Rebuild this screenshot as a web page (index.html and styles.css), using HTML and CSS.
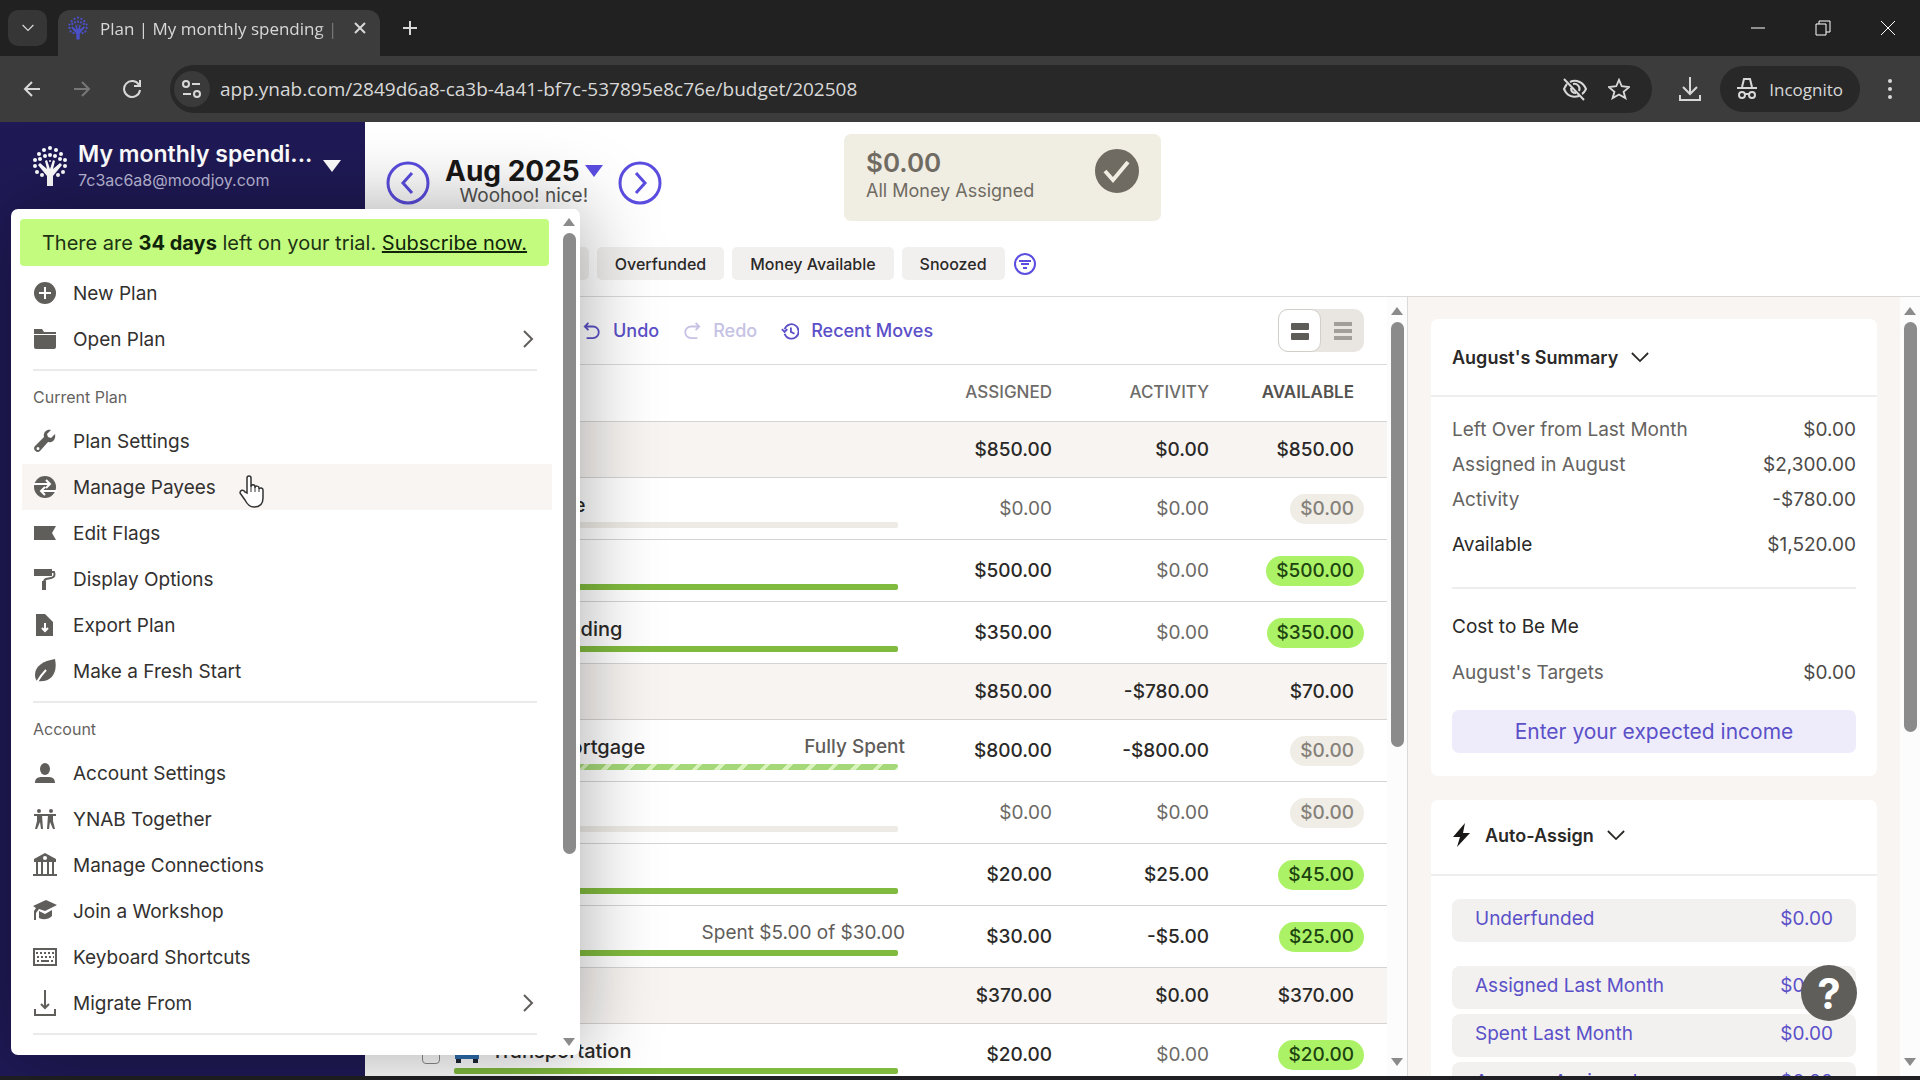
FILE: index.html
```
<!DOCTYPE html>
<html lang="en">
<head>
    <meta charset="UTF-8">
    <meta name="viewport" content="width=device-width, initial-scale=1.0">
    <title>Plan | My monthly spending | YNAB</title>
    <link rel="stylesheet" href="styles.css">
</head>
<body>
    <!-- shared icons -->
    <svg class="sprite" aria-hidden="true">
        <symbol id="chevron-right" viewBox="0 0 12 20"><path d="M2 2l8 8-8 8" fill="none" stroke="currentColor" stroke-width="2"/></symbol>
        <symbol id="chevron-down" viewBox="0 0 20 12"><path d="M1 1l9 9 9-9" fill="none" stroke="currentColor" stroke-width="2"/></symbol>
        <symbol id="tree" viewBox="0 0 34 42">
            <path d="M14 41V31L5 20l2-2 7 6-2-8 2-1 3 9 3-9 2 1-2 8 7-6 2 2-9 11v10z"/>
            <circle cx="17" cy="3" r="2"/><circle cx="17" cy="10" r="2"/><circle cx="11" cy="5" r="2"/><circle cx="23" cy="5" r="2"/>
            <circle cx="12" cy="11" r="2"/><circle cx="22" cy="11" r="2"/><circle cx="6" cy="9" r="2"/><circle cx="28" cy="9" r="2"/>
            <circle cx="7" cy="14" r="2"/><circle cx="27" cy="14" r="2"/><circle cx="2" cy="15" r="2"/><circle cx="32" cy="15" r="2"/>
            <circle cx="2" cy="21" r="2"/><circle cx="32" cy="21" r="2"/><circle cx="4" cy="27" r="2"/><circle cx="30" cy="27" r="2"/>
            <circle cx="9" cy="30" r="2"/><circle cx="25" cy="30" r="2"/><circle cx="17" cy="16" r="1"/>
        </symbol>
    </svg>

    <div class="tab-strip">
        <button class="tab-search" aria-label="Search tabs"><svg width="12" height="8"><use href="#chevron-down"/></svg></button>
        <div class="tab">
            <svg class="tab-logo" width="20" height="24"><use href="#tree"/></svg>
            <span class="tab-title">Plan | My monthly spending | YNAB</span>
            <button class="tab-close" aria-label="Close tab"><svg width="12" height="12" viewBox="0 0 12 12"><path d="M1 1l10 10M11 1L1 11"/></svg></button>
        </div>
        <button class="tab-new" aria-label="New tab"><svg width="16" height="16" viewBox="0 0 16 16"><path d="M8 1v14M1 8h14"/></svg></button>
        <div class="window-buttons">
            <button aria-label="Minimize"><svg width="14" height="16" viewBox="0 0 14 16"><path d="M0 8h14"/></svg></button>
            <button aria-label="Restore"><svg width="16" height="16" viewBox="0 0 16 16"><path d="M1 4h10v11H1zM4 4V1h11v11h-4"/></svg></button>
            <button aria-label="Close"><svg width="14" height="16" viewBox="0 0 14 16"><path d="M0 1l14 14M14 1L0 15"/></svg></button>
        </div>
    </div>

    <div class="toolbar">
        <button aria-label="Back"><svg width="18" height="18" viewBox="0 0 18 18"><path d="M17 9H2M9 2L2 9l7 7"/></svg></button>
        <button class="dim" aria-label="Forward"><svg width="18" height="18" viewBox="0 0 18 18"><path d="M1 9h15M9 2l7 7-7 7"/></svg></button>
        <button aria-label="Reload"><svg width="20" height="20" viewBox="0 0 20 20"><path d="M17 6a8 8 0 1 0 1 5M18 1v6h-6"/></svg></button>
        <div class="address-bar">
            <button class="site-info" aria-label="Site information"><svg width="20" height="18" viewBox="0 0 20 18"><circle cx="4" cy="4" r="3"/><path d="M10 4h8M1 14h8"/><circle cx="15" cy="14" r="3"/></svg></button>
            <input class="address" type="text" aria-label="Address" value="app.ynab.com/2849d6a8-ca3b-4a41-bf7c-537895e8c76e/budget/202508">
            <button aria-label="Tracking protection"><svg width="26" height="26" viewBox="0 0 26 26"><path d="M8 6c6-3 13 0 16 7-1 2-2 4-4 5M17 20C11 22 5 20 2 13c1-2 2-4 3-5M2 3l20 21M11 8c4-1 8 3 6 7M9 12c0 3 2 5 5 5"/></svg></button>
            <button aria-label="Bookmark"><svg width="22" height="22" viewBox="0 0 24 24"><path d="M12 2l3 7 8 1-6 5 2 7-7-4-7 4 2-7-6-5 8-1z"/></svg></button>
        </div>
        <button class="download" aria-label="Downloads"><svg width="24" height="26" viewBox="0 0 24 26"><path d="M12 1v16M5 11l7 7 7-7M2 19v5h20v-5"/></svg></button>
        <button class="incognito"><svg width="20" height="22" viewBox="0 0 20 22"><path d="M0 10h20M5 9l2-8h6l2 8"/><circle cx="5" cy="17" r="3"/><circle cx="15" cy="17" r="3"/><path d="M8 16h4"/></svg>Incognito</button>
        <button aria-label="Browser menu"><svg class="solid" width="6" height="24" viewBox="0 0 6 24"><circle cx="3" cy="4" r="2"/><circle cx="3" cy="12" r="2"/><circle cx="3" cy="20" r="2"/></svg></button>
    </div>

    <div class="app">
        <aside class="sidebar">
            <button class="plan-button">
                <svg class="logo" width="34" height="42"><use href="#tree"/></svg>
                <span class="plan-text">
                    <span class="plan-name">My monthly spendi...</span>
                    <span class="plan-email">7c3ac6a8@moodjoy.com</span>
                </span>
                <span class="caret"></span>
            </button>
        </aside>

        <main class="main">
            <header class="plan-header">
                <div class="header-top">
                    <div class="month-nav">
                        <button aria-label="Previous month"><svg width="44" height="44" viewBox="0 0 44 44"><circle cx="22" cy="22" r="20"/><path d="M26 12L17 22l9 10"/></svg></button>
                        <div class="month">
                            <button class="month-name">Aug 2025<span class="caret"></span></button>
                            <div class="month-note">Woohoo! nice!</div>
                        </div>
                        <button aria-label="Next month"><svg width="44" height="44" viewBox="0 0 44 44"><circle cx="22" cy="22" r="20"/><path d="M18 12l9 10-9 10"/></svg></button>
                    </div>
                    <div class="ready">
                        <div>
                            <div class="ready-amount">$0.00</div>
                            <div class="ready-label">All Money Assigned</div>
                        </div>
                        <svg width="44" height="50" viewBox="0 0 44 50"><circle cx="22" cy="25" r="21" fill="#6f6b63"/><path d="M10 25l8 9 15-18" fill="none" stroke="#f0ede2" stroke-width="4"/></svg>
                    </div>
                </div>
                <div class="filters">
                    <button class="chip">Underfunded</button>
                    <button class="chip">Overfunded</button>
                    <button class="chip">Money Available</button>
                    <button class="chip">Snoozed</button>
                    <button class="filter-more" aria-label="Filters"><svg width="24" height="24" viewBox="0 0 24 24"><circle cx="12" cy="12" r="10"/><path d="M6 9h12M8 12h8M10 16h4"/></svg></button>
                </div>
            </header>

            <div class="columns">
                <section class="budget">
                    <div class="budget-content">
                        <div class="budget-tools">
                            <button class="tool"><svg width="18" height="18" viewBox="0 0 20 20"><path d="M6 1L2 5l4 4M2 5h9a6 6 0 0 1 0 13H4"/></svg>Undo</button>
                            <button class="tool" disabled><svg width="18" height="18" viewBox="0 0 20 20"><path d="M14 1l4 4-4 4M18 5H9a6 6 0 0 0 0 13h7"/></svg>Redo</button>
                            <button class="tool"><svg width="18" height="18" viewBox="0 0 20 20"><path d="M4 8a8 8 0 1 1 0 5M1 8l3 3 3-3M11 6v5l4 2"/></svg>Recent Moves</button>
                            <div class="view-toggle">
                                <button class="active" aria-label="Expanded view"><svg width="20" height="20" viewBox="0 0 20 20"><rect x="1" y="2" width="18" height="7" rx="1"/><rect x="1" y="12" width="18" height="7" rx="1"/></svg></button>
                                <button aria-label="Compact view"><svg width="20" height="20" viewBox="0 0 20 20"><rect x="1" y="1" width="18" height="4"/><rect x="1" y="8" width="18" height="4"/><rect x="1" y="15" width="18" height="4"/></svg></button>
                            </div>
                        </div>
                        <table class="budget-table">
                            <thead>
                                <tr>
                                    <th class="col-name"></th>
                                    <th class="col-assigned">ASSIGNED</th>
                                    <th class="col-activity">ACTIVITY</th>
                                    <th class="col-available"><span class="amount">AVAILABLE</span></th>
                                </tr>
                            </thead>
                            <tbody>
                                <tr class="group">
                                    <td></td><td>$850.00</td><td>$0.00</td><td><span class="amount">$850.00</span></td>
                                </tr>
                                <tr>
                                    <td><div class="category"><input type="checkbox" aria-label="Insurance"><div class="category-body"><div class="category-line"><span class="emoji"></span><span>Insurance</span></div><div class="bar empty"></div></div></div></td>
                                    <td class="zero">$0.00</td><td class="zero">$0.00</td><td><span class="amount none">$0.00</span></td>
                                </tr>
                                <tr>
                                    <td><div class="category"><input type="checkbox" aria-label="Savings"><div class="category-body"><div class="category-line"><span class="emoji"></span><span>Savings</span></div><div class="bar"></div></div></div></td>
                                    <td>$500.00</td><td class="zero">$0.00</td><td><span class="amount funded">$500.00</span></td>
                                </tr>
                                <tr>
                                    <td><div class="category"><input type="checkbox" aria-label="Fun Spending"><div class="category-body"><div class="category-line"><span class="emoji"></span><span>Fun Spending</span></div><div class="bar"></div></div></div></td>
                                    <td>$350.00</td><td class="zero">$0.00</td><td><span class="amount funded">$350.00</span></td>
                                </tr>
                                <tr class="group">
                                    <td></td><td>$850.00</td><td>-$780.00</td><td><span class="amount">$70.00</span></td>
                                </tr>
                                <tr>
                                    <td><div class="category"><input type="checkbox" aria-label="Rent / Mortgage"><div class="category-body"><div class="category-line"><span class="emoji"></span><span>Rent / Mortgage</span><span class="status strong">Fully Spent</span></div><div class="bar spent"></div></div></div></td>
                                    <td>$800.00</td><td>-$800.00</td><td><span class="amount none">$0.00</span></td>
                                </tr>
                                <tr>
                                    <td><div class="category"><input type="checkbox" aria-label="Water"><div class="category-body"><div class="category-line"><span class="emoji"></span><span>Water</span></div><div class="bar empty"></div></div></div></td>
                                    <td class="zero">$0.00</td><td class="zero">$0.00</td><td><span class="amount none">$0.00</span></td>
                                </tr>
                                <tr>
                                    <td><div class="category"><input type="checkbox" aria-label="Phone"><div class="category-body"><div class="category-line"><span class="emoji"></span><span>Phone</span></div><div class="bar"></div></div></div></td>
                                    <td>$20.00</td><td>$25.00</td><td><span class="amount funded">$45.00</span></td>
                                </tr>
                                <tr>
                                    <td><div class="category"><input type="checkbox" aria-label="Internet"><div class="category-body"><div class="category-line"><span class="emoji"></span><span>Internet</span><span class="status">Spent $5.00 of $30.00</span></div><div class="bar"></div></div></div></td>
                                    <td>$30.00</td><td>-$5.00</td><td><span class="amount funded">$25.00</span></td>
                                </tr>
                                <tr class="group">
                                    <td></td><td>$370.00</td><td>$0.00</td><td><span class="amount">$370.00</span></td>
                                </tr>
                                <tr>
                                    <td><div class="category"><input type="checkbox" aria-label="Transportation"><div class="category-body"><div class="category-line"><span class="emoji"><svg width="26" height="24" viewBox="0 0 26 24"><path d="M5 3h16l3 9H2z" fill="#9fc5e8"/><path d="M1 11h24v9H1z" fill="#2f6fb0"/><path d="M2 20h5v4H2zM19 20h5v4h-5z" fill="#1c2733"/></svg></span><span>Transportation</span></div><div class="bar"></div></div></div></td>
                                    <td>$20.00</td><td class="zero">$0.00</td><td><span class="amount funded">$20.00</span></td>
                                </tr>
                            </tbody>
                        </table>
                    </div>
                    <div class="scrollbar"><span class="arrow up"></span><span class="thumb"></span><span class="arrow down"></span></div>
                </section>

                <aside class="inspector">
                    <div class="inspector-content">
                        <section class="card">
                            <h2><button>August's Summary<svg width="18" height="11"><use href="#chevron-down"/></svg></button></h2>
                            <div class="card-body">
                                <dl class="totals">
                                    <div><dt>Left Over from Last Month</dt><dd>$0.00</dd></div>
                                    <div><dt>Assigned in August</dt><dd>$2,300.00</dd></div>
                                    <div><dt>Activity</dt><dd>-$780.00</dd></div>
                                    <div class="total"><dt>Available</dt><dd>$1,520.00</dd></div>
                                </dl>
                                <h3>Cost to Be Me</h3>
                                <dl class="targets">
                                    <div><dt>August's Targets</dt><dd>$0.00</dd></div>
                                </dl>
                                <button class="income">Enter your expected income</button>
                            </div>
                        </section>
                        <section class="card auto">
                            <h2><button><svg class="bolt" width="20" height="24" viewBox="0 0 20 24"><path d="M13 0L1 14h7l-3 10L18 10h-7z"/></svg>Auto-Assign<svg width="18" height="11"><use href="#chevron-down"/></svg></button></h2>
                            <div class="card-body">
                                <button class="assign first">Underfunded<span>$0.00</span></button>
                                <button class="assign">Assigned Last Month<span>$0.00</span></button>
                                <button class="assign">Spent Last Month<span>$0.00</span></button>
                                <button class="assign">Average Assigned<span>$0.00</span></button>
                            </div>
                        </section>
                    </div>
                    <div class="scrollbar"><span class="arrow up"></span><span class="thumb"></span><span class="arrow down"></span></div>
                </aside>
            </div>
        </main>

        <nav class="menu">
            <div class="menu-content">
                <div class="trial"><span>There are <b>34 days</b> left on your trial. <a href="#">Subscribe now.</a></span></div>
                <button class="item"><svg width="24" height="24" viewBox="0 0 24 24"><circle cx="12" cy="12" r="11"/><path class="cut" d="M12 6v12M6 12h12"/></svg>New Plan</button>
                <button class="item"><svg width="24" height="24" viewBox="0 0 24 24"><path d="M1 2h8l2 3h12v2H1zM1 8h22v12a2 2 0 0 1-2 2H3a2 2 0 0 1-2-2z"/></svg>Open Plan<svg class="more" width="12" height="20"><use href="#chevron-right"/></svg></button>
                <div class="menu-heading">Current Plan</div>
                <button class="item"><svg width="24" height="24" viewBox="0 0 24 24"><path d="M22 5l-4 4-3-1-1-3 4-4c-5-1-8 3-7 7L2 17c-3 3 2 8 5 5l8-9c5 1 8-3 7-8zM5 21a1 1 0 1 1 0-3 1 1 0 0 1 0 3z"/></svg>Plan Settings</button>
                <button class="item hover"><svg width="24" height="24" viewBox="0 0 24 24"><circle cx="12" cy="12" r="11"/><path class="cut" d="M0 9h17M13 5l4 4-4 4M24 16H8M12 12l-4 4 4 4"/></svg>Manage Payees</button>
                <button class="item"><svg width="24" height="24" viewBox="0 0 24 24"><path d="M1 5h22l-4 7 4 7H1z"/></svg>Edit Flags</button>
                <button class="item"><svg width="24" height="24" viewBox="0 0 24 24"><path d="M1 2h18v7H1z"/><path class="line" d="M19 5h2q2 5-3 6l-5 1q-2 1-2 3"/><path d="M9 14h4v9H9z"/></svg>Display Options</button>
                <button class="item"><svg width="24" height="24" viewBox="0 0 24 24"><path d="M3 1h9l8 8v14H3z"/><path class="cut" d="M12 10v8M9 15l3 3 3-3"/></svg>Export Plan</button>
                <button class="item"><svg width="24" height="24" viewBox="0 0 24 24"><path d="M22 0C10 2 2 7 2 16c0 3 1 5 2 6C18 24 25 14 22 0z"/><path class="cut" d="M4 23c3-5 5-8 9-12"/></svg>Make a Fresh Start</button>
                <div class="menu-heading">Account</div>
                <button class="item"><svg width="24" height="24" viewBox="0 0 24 24"><ellipse cx="12" cy="8" rx="5" ry="6"/><path d="M2 22c0-7 6-6 10-6s10-1 10 6z"/></svg>Account Settings</button>
                <button class="item"><svg width="24" height="24" viewBox="0 0 24 24"><circle cx="6" cy="4" r="2"/><circle cx="18" cy="4" r="2"/><path class="line" d="M1 8h22"/><path d="M4 8h5l1 14H8l-1-7-3 7H2l2-8zM15 8h5v6l2 8h-2l-3-7-1 7h-2z"/></svg>YNAB Together</button>
                <button class="item"><svg width="24" height="24" viewBox="0 0 24 24"><path d="M12 0l11 6v3H1V6z"/><path class="line" d="M4 9v12M9 9v12M15 9v12M20 9v12M0 22h24"/><circle class="hole" cx="12" cy="5" r="2"/></svg>Manage Connections</button>
                <button class="item"><svg width="24" height="24" viewBox="0 0 24 24"><path d="M0 7l13-6 11 5-12 6-6-2-3 4v7H1v-9l2-3zM6 12l6 3 7-4v6c-4 4-9 4-13 2z"/></svg>Join a Workshop</button>
                <button class="item"><svg width="24" height="24" viewBox="0 0 24 24"><rect class="line" x="1" y="4" width="22" height="16"/><path class="line dashed" d="M3 8h18M4 12h17"/><path class="line" d="M4 16h2M8 16h8M18 16h2"/></svg>Keyboard Shortcuts</button>
                <button class="item"><svg width="24" height="28" viewBox="0 0 24 28"><path class="line" d="M12 1v18M8 15l4 4 4-4M2 20v6h20v-6"/></svg>Migrate From<svg class="more" width="12" height="20"><use href="#chevron-right"/></svg></button>
                <div class="menu-heading"></div>
            </div>
            <div class="scrollbar"><span class="arrow up"></span><span class="thumb"></span><span class="arrow down"></span></div>
        </nav>

        <svg class="pointer" width="26" height="34" viewBox="0 0 26 34"><path d="M8 19V4a2 2 0 0 1 4 0v9c0-3 4-3 4 0v1c0-3 4-2 4 0v1c1-2 4-1 4 1v8c0 6-3 9-9 9-5 0-7-3-9-7l-5-7c0-3 3-4 5-1z" fill="#fff" stroke="#333" stroke-width="1.5"/><path d="M12 13v5M16 14v4M20 15v3" stroke="#333" stroke-width="1"/></svg>
        <button class="help" aria-label="Help">?</button>
    </div>
    <footer class="taskbar"></footer>
</body>
</html>
```
FILE: styles.css
```
* {
    box-sizing: border-box;
}
body {
    margin: 0;
    height: 100vh;
    display: flex;
    flex-direction: column;
    overflow: hidden;
    font-family: Inter, "Liberation Sans", sans-serif;
    font-size: 19px;
    color: #2a2927;
    background: #fff;
}
button {
    font: inherit;
    color: inherit;
    background: none;
    border: 0;
    padding: 0;
    display: flex;
    align-items: center;
    justify-content: center;
    text-align: left;
    white-space: nowrap;
}
svg {
    flex: none;
    fill: none;
    stroke: currentColor;
    stroke-width: 2;
}
.sprite {
    display: none;
}

/* browser window */
.tab-strip, .toolbar {
    font-family: "Open Sans", "Noto Sans", sans-serif;
    color: #d8d8d8;
    display: flex;
    flex: none;
}
.tab-strip {
    height: 56px;
    padding: 10px 0 0 8px;
    background: #212121;
}
.tab-search {
    width: 39px;
    height: 36px;
    border-radius: 10px;
    background: #363636;
}
.tab {
    width: 322px;
    margin-left: 11px;
    padding: 0 14px 10px 10px;
    display: flex;
    align-items: center;
    gap: 12px;
    border-radius: 12px 12px 0 0;
    background: #3c3c3c;
    font-size: 17px;
}
.tab-logo {
    fill: #4a50c8;
    stroke: none;
}
.tab-title {
    flex: 1;
    overflow: hidden;
    white-space: nowrap;
    mask-image: linear-gradient(to right, #000 90%, transparent);
}
.tab-new {
    width: 60px;
    height: 36px;
}
.window-buttons {
    margin-left: auto;
    display: flex;
    height: 36px;
}
.window-buttons button {
    width: 65px;
    color: #fff;
}
.window-buttons svg {
    stroke-width: 1;
}
.toolbar {
    height: 66px;
    padding: 0 18px 0 20px;
    align-items: center;
    background: #3c3c3c;
}
.toolbar > button {
    width: 24px;
    margin-right: 26px;
}
.toolbar > button:last-child {
    margin-right: 0;
}
.toolbar .dim {
    color: #777;
}
.address-bar {
    flex: 1;
    height: 48px;
    padding: 0 22px 0 4px;
    display: flex;
    align-items: center;
    gap: 20px;
    border-radius: 24px;
    background: #282828;
}
.site-info {
    width: 36px;
    height: 36px;
    border-radius: 18px;
    background: #3a3a3a;
}
.address {
    flex: 1;
    padding: 0;
    margin-left: -10px;
    border: 0;
    background: none;
    font: inherit;
    color: #d8d8d8;
}
.toolbar .download {
    margin: 0 18px 0 26px;
}
.toolbar .incognito {
    width: auto;
    height: 46px;
    margin-right: 18px;
    padding: 0 17px;
    gap: 12px;
    border-radius: 23px;
    background: #282828;
    font-size: 17px;
}
.solid {
    fill: currentColor;
    stroke: none;
}

/* app */
.app {
    flex: 1;
    min-height: 0;
    display: flex;
    position: relative;
}
.taskbar {
    height: 4px;
    flex: none;
    background: #202024;
}
.sidebar {
    width: 365px;
    flex: none;
    background: #1f1a56;
}
.plan-button {
    width: 100%;
    height: 88px;
    padding: 0 24px 0 33px;
    justify-content: flex-start;
    color: #fff;
}
.logo {
    fill: #fff;
    stroke: none;
}
.plan-text {
    flex: 1;
    margin-left: 11px;
}
.plan-name, .plan-email {
    display: block;
}
.plan-name {
    font-size: 23px;
    line-height: 28px;
    font-weight: 600;
}
.plan-email {
    font-size: 16px;
    line-height: 24px;
    color: #bcb9d8;
}
.caret {
    border: 9px solid transparent;
    border-top: 12px solid currentColor;
    border-bottom: 0;
}
.main {
    flex: 1;
    min-width: 0;
    display: flex;
    flex-direction: column;
}
.plan-header {
    flex: none;
    padding: 12px 21px 16px;
    border-bottom: 1px solid #dcdad8;
}
.header-top {
    display: flex;
    height: 87px;
}
.month-nav {
    width: 458px;
    padding-top: 21px;
    display: flex;
    align-items: center;
    gap: 15px;
    align-self: flex-start;
}
.month-nav > button, .month-name .caret {
    color: #5b4de0;
}
.month-nav svg {
    stroke-width: 3;
}
.month {
    padding-bottom: 6px;
    text-align: center;
}
.month-name {
    gap: 5px;
    font-size: 28px;
    line-height: 32px;
    font-weight: 700;
    color: #191817;
}
.month-note {
    line-height: 18px;
    color: #55534f;
}
.ready {
    width: 317px;
    padding: 12px 22px;
    display: flex;
    justify-content: space-between;
    border-radius: 7px;
    background: #f0ede2;
    color: #6f6b63;
}
.ready-amount {
    font-size: 26px;
    line-height: 34px;
    font-weight: 600;
}
.ready-label {
    font-size: 18px;
    line-height: 22px;
}
.filters {
    margin-top: 26px;
    padding-left: 65px;
    display: flex;
    gap: 8px;
}
.chip {
    height: 33px;
    padding: 0 18px;
    border-radius: 5px;
    background: #f2f0ef;
    font-size: 16px;
    font-weight: 500;
}
.filter-more {
    color: #5b4de0;
}
.columns {
    flex: 1;
    min-height: 0;
    display: flex;
}
.budget {
    flex: 1;
    min-width: 0;
    display: flex;
    overflow: hidden;
}
.budget-content {
    flex: 1;
    min-width: 0;
}
.budget-tools {
    height: 68px;
    padding: 0 23px 0 218px;
    display: flex;
    align-items: center;
    gap: 24px;
    border-bottom: 1px solid #dcdad8;
}
.tool {
    gap: 12px;
    font-size: 18px;
    font-weight: 500;
    color: #5b50c8;
}
.tool:disabled {
    color: #c6c2e4;
}
.view-toggle {
    margin-left: auto;
    display: flex;
    border-radius: 10px;
    background: #e9e6e1;
    color: #a29f9a;
}
.view-toggle button {
    width: 43px;
    height: 43px;
    border-radius: 10px;
}
.view-toggle .active {
    border: 1px solid #d2cfca;
    background: #fff;
    color: #5e5c58;
}
.view-toggle svg {
    fill: currentColor;
    stroke: none;
}
.budget-table {
    width: 100%;
    table-layout: fixed;
    border-collapse: separate;
    border-spacing: 0;
}
.budget-table th, .budget-table td {
    height: 62px;
    padding: 0;
    border-bottom: 1px solid #d6d4d2;
    text-align: right;
    white-space: nowrap;
    font-weight: 500;
}
.budget-table th {
    height: 57px;
    padding-bottom: 2px;
    font-size: 17px;
    color: #6e6c69;
}
.budget-table .group td {
    height: 56px;
    background: #f7f4f2;
}
.col-assigned {
    width: 147px;
}
.col-activity {
    width: 157px;
}
.col-available {
    width: 178px;
}
.budget-table th:last-child {
    font-weight: 600;
    color: #54524f;
}
.budget-table th:last-child, .budget-table td:last-child {
    padding-right: 23px;
}
.budget-table .zero {
    font-weight: 400;
    color: #6b6966;
}
.amount {
    display: inline-block;
    padding: 0 10px;
    line-height: 30px;
    border-radius: 15px;
}
.amount.funded {
    background: #acf266;
    color: #1d4410;
}
.amount.none {
    background: #f0ede6;
    color: #85817a;
}
.category {
    padding-left: 57px;
    display: flex;
    align-items: center;
    gap: 14px;
    text-align: left;
}
.category input {
    appearance: none;
    width: 18px;
    height: 18px;
    margin: 0;
    border: 1px solid #8d8b88;
    border-radius: 4px;
    background: #fff;
}
.category-body {
    flex: 1;
}
.category-line {
    height: 30px;
    margin-bottom: 2px;
    display: flex;
    align-items: center;
    font-size: 20px;
}
.emoji {
    width: 37px;
    height: 24px;
}
.emoji svg {
    display: block;
    stroke: none;
}
.status {
    margin-left: auto;
    font-size: 19px;
    font-weight: 400;
    color: #5f5d5a;
}
.status.strong {
    font-weight: 500;
}
.bar {
    height: 6px;
    margin-right: 7px;
    border-radius: 2px;
    background: #80ba3e;
}
.bar.empty {
    background: #eeebe6;
}
.bar.spent {
    background: repeating-linear-gradient(135deg, #a4d878 0 12px, #d8f4bc 12px 16px);
}

/* right column */
.inspector {
    width: 513px;
    flex: none;
    display: flex;
    overflow: hidden;
    border-left: 1px solid #dcdad8;
    background: #f8f5f3;
}
.inspector-content {
    flex: 1;
    padding: 22px 23px 0;
}
.card {
    margin-bottom: 24px;
    border-radius: 7px;
    background: #fff;
}
.card h2 {
    height: 78px;
    margin: 0;
    padding: 0 21px;
    display: flex;
    border-bottom: 2px solid #f0eeec;
    font-size: 18px;
    font-weight: 600;
}
.card.auto h2 {
    height: 76px;
    padding-bottom: 4px;
}
.card h2 button {
    gap: 13px;
}
.bolt {
    fill: #191817;
    stroke: none;
}
.card-body {
    padding: 15px 21px 23px;
}
dl, h3 {
    margin: 0;
}
dl div {
    height: 35px;
    display: flex;
    justify-content: space-between;
    align-items: center;
}
dt {
    color: #65635f;
}
dd {
    margin: 0;
    color: #4c4a47;
}
.totals {
    padding-bottom: 25px;
    border-bottom: 2px solid #efedeb;
}
.totals .total {
    margin-top: 10px;
}
.total dt {
    color: #2a2927;
}
.card h3 {
    margin-top: 20px;
    line-height: 36px;
    font-size: 19px;
    font-weight: 400;
}
.targets {
    margin: 10px 0 20px;
}
.income {
    width: 100%;
    height: 43px;
    border-radius: 7px;
    background: #eeecfb;
    font-size: 21px;
    color: #5b50c8;
}
.card.auto .card-body {
    padding-top: 23px;
}
.assign {
    width: 100%;
    height: 43px;
    margin-bottom: 5px;
    padding: 0 23px 4px;
    justify-content: space-between;
    border-radius: 8px;
    background: #f2f1f0;
    color: #5b50c8;
}
.assign.first {
    margin-bottom: 24px;
}

/* drawn scrollbars */
.scrollbar {
    width: 20px;
    padding: 10px 0;
    flex: none;
    display: flex;
    flex-direction: column;
    align-items: center;
    background: #fcfcfc;
}
.arrow {
    border: 6px solid transparent;
}
.arrow.up {
    border-top: 0;
    border-bottom: 8px solid #8b8b8b;
}
.arrow.down {
    margin-top: auto;
    border-bottom: 0;
    border-top: 8px solid #8b8b8b;
}
.thumb {
    width: 13px;
    height: 56%;
    margin-top: 7px;
    border-radius: 7px;
    background: #8b8b8b;
}
.inspector .thumb {
    height: 54%;
}

/* plan menu, over the page */
.menu {
    position: absolute;
    left: 11px;
    top: 87px;
    bottom: 21px;
    width: 569px;
    display: flex;
    overflow: hidden;
    border-radius: 7px;
    background: #fff;
    box-shadow: 0 0 80px rgba(0, 0, 0, 0.35);
}
.menu-content {
    flex: 1;
    overflow: hidden;
}
.menu .scrollbar {
    width: 18px;
    padding: 9px 0 9px;
    background: #fff;
    margin-right: 2px;
}
.menu .thumb {
    height: 75%;
}
.trial {
    height: 47px;
    margin: 10px 11px 4px 9px;
    display: flex;
    align-items: center;
    justify-content: center;
    border-radius: 4px;
    background: #c3fb7f;
    font-size: 20px;
    white-space: nowrap;
    color: #1d3314;
}
.trial a, .trial b {
    color: #10240a;
}
.item {
    width: 530px;
    height: 46px;
    margin-left: 11px;
    padding-left: 11px;
    padding-right: 18px;
    justify-content: flex-start;
    gap: 16px;
    font-weight: 400;
    color: #33312f;
}
.item.hover {
    background: #f8f5f3;
}
.item svg {
    fill: #605e5b;
    color: #605e5b;
    stroke: none;
}
.item .cut {
    fill: none;
    stroke: #fff;
    stroke-width: 2;
}
.item .line {
    fill: none;
    stroke: #605e5b;
    stroke-width: 2;
}
.item .dashed {
    stroke-dasharray: 2 2;
}
.item .hole {
    fill: #fff;
}
.item .more {
    margin-left: auto;
}
.menu-heading {
    height: 49px;
    margin: 7px 23px 0 22px;
    padding-top: 4px;
    display: flex;
    align-items: center;
    border-top: 2px solid #ebeae9;
    font-size: 16px;
    color: #65635f;
}
.pointer {
    position: absolute;
    left: 239px;
    top: 352px;
}
.help {
    position: absolute;
    right: 63px;
    bottom: 55px;
    width: 56px;
    height: 56px;
    border-radius: 50%;
    background: #605e5b;
    color: #fff;
    font-size: 42px;
    font-weight: 700;
}
```
